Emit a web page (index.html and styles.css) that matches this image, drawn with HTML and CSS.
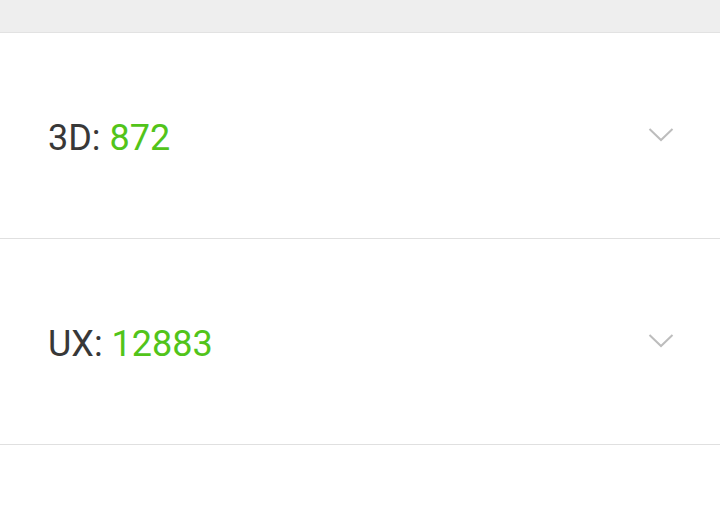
FILE: index.html
```html
<!DOCTYPE html>
<html>
<head>
<meta charset="utf-8">
<link rel="stylesheet" href="styles.css">
</head>
<body>
<div class="topbar"></div>
<div class="list">
  <div class="row">
    <div class="label">3D: <span class="count">872</span></div>
    <svg class="chev" width="26" height="16" viewBox="0 0 26 16"><polyline points="1.5,2 13,13 24.5,2" fill="none" stroke="#bdbdbd" stroke-width="2"/></svg>
  </div>
  <div class="row">
    <div class="label">UX: <span class="count">12883</span></div>
    <svg class="chev" width="26" height="16" viewBox="0 0 26 16"><polyline points="1.5,2 13,13 24.5,2" fill="none" stroke="#bdbdbd" stroke-width="2"/></svg>
  </div>
</div>
</body>
</html>
```

FILE: styles.css
```css
html, body {
  margin: 0;
  padding: 0;
  background: #ffffff;
}
body {
  font-family: Roboto, "Liberation Sans", sans-serif;
}
.topbar {
  height: 32px;
  background: #eeeeee;
  border-bottom: 1px solid #e2e2e2;
}
.row {
  height: 205px;
  border-bottom: 1px solid #e0e0e0;
  display: flex;
  align-items: center;
  justify-content: space-between;
  padding: 0 46px 0 48px;
}
.label {
  font-size: 36px;
  color: #383838;
  line-height: 1;
  margin-top: 4px;
}
.count {
  color: #52c41a;
}
.chev {
  display: block;
  margin-top: -2px;
}
```
